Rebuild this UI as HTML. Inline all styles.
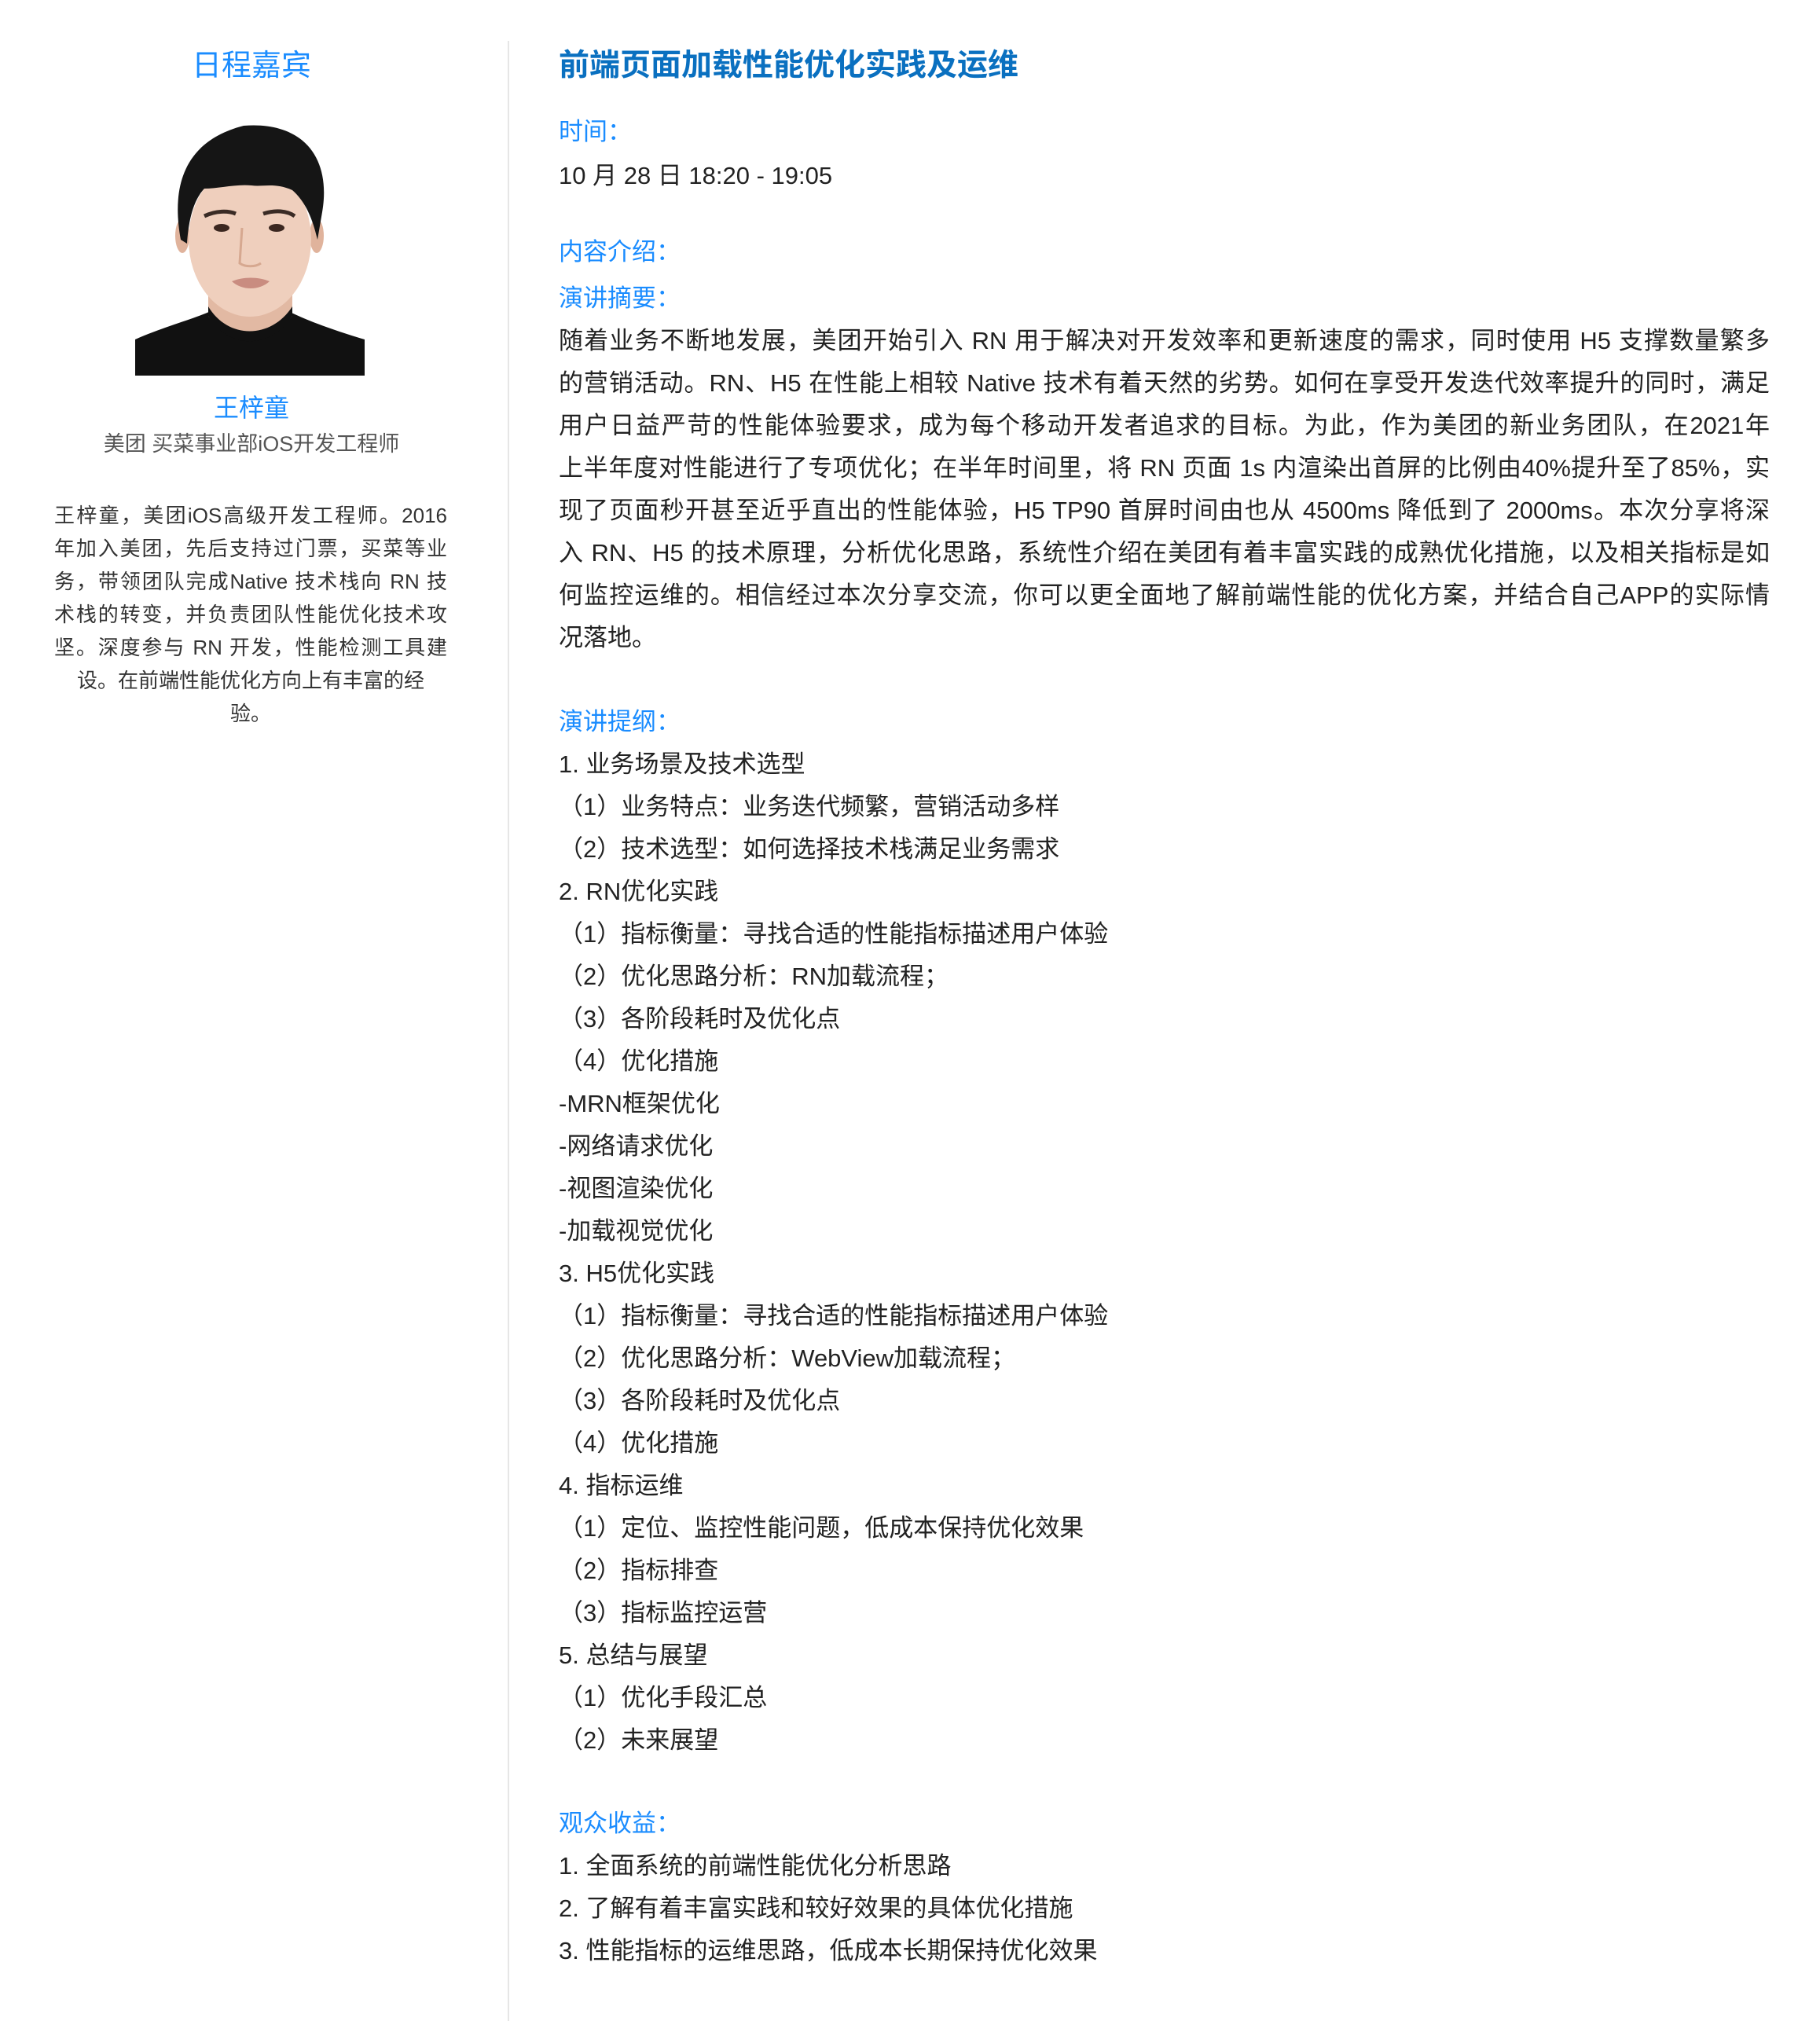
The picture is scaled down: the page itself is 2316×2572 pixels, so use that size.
<!DOCTYPE html>
<html><head><meta charset="utf-8">
<style>
html,body{margin:0;padding:0;background:#fff;}
body{width:2316px;height:2572px;position:relative;overflow:hidden;font-family:"Liberation Sans","Noto Sans CJK SC",sans-serif;color:#222;}
.a{position:absolute;white-space:nowrap;}
.lbl{color:#1a8cff;font-size:31px;line-height:54px;}
.txt{font-size:31px;line-height:54px;}
.pl{display:block;text-align:justify;text-align-last:justify;width:1541px;font-size:31px;line-height:54px;white-space:nowrap;}
.pl.last{text-align-last:left;}
.bio div{text-align:justify;text-align-last:justify;}
</style></head><body>
<div class="a" style="left:646px;top:52px;width:2px;height:2520px;background:#e6e6e6"></div>

<div class="a" style="left:0;width:640px;top:58px;text-align:center;font-size:38px;line-height:52px;color:#1a8cff">日程嘉宾</div>
<svg class="a" style="left:160px;top:140px" width="320" height="350" viewBox="0 0 320 350">
<rect x="12" y="18" width="292" height="320" fill="#fff"/>
<path d="M12 292 C50 275 90 265 110 255 L205 255 C230 268 270 282 304 292 L304 338 L12 338Z" fill="#111"/>
<path d="M105 210 L105 262 C130 300 185 300 212 262 L212 210Z" fill="#e2b9a3"/>
<path d="M105 250 C130 292 185 292 212 250 L212 262 C185 305 130 305 105 262Z" fill="#111"/>
<ellipse cx="72" cy="160" rx="9" ry="22" fill="#e0b39c"/>
<ellipse cx="243" cy="160" rx="9" ry="22" fill="#e0b39c"/>
<ellipse cx="158" cy="165" rx="78" ry="98" fill="#efcfbd"/>
<path d="M70 165 C58 100 72 40 150 20 C225 14 262 60 250 130 L244 165 C238 140 230 118 212 102 C190 92 175 98 160 96 C140 94 118 100 100 100 C86 115 80 140 78 170Z" fill="#151515"/>
<path d="M100 135 C115 128 130 128 140 132" stroke="#3a2b25" stroke-width="5" fill="none"/>
<path d="M175 132 C190 127 205 128 215 135" stroke="#3a2b25" stroke-width="5" fill="none"/>
<ellipse cx="122" cy="150" rx="10" ry="5" fill="#3b2720"/>
<ellipse cx="192" cy="150" rx="10" ry="5" fill="#3b2720"/>
<path d="M148 150 L145 195 C152 200 165 200 172 195" stroke="#d6a890" stroke-width="3" fill="none"/>
<path d="M135 218 C150 212 168 212 183 218 C170 230 148 230 135 218Z" fill="#c98c80"/>
</svg>
<div class="a" style="left:0;width:640px;top:497px;text-align:center;font-size:32px;line-height:44px;color:#1a8cff">王梓童</div>
<div class="a" style="left:0;width:640px;top:546px;text-align:center;font-size:27px;line-height:38px;color:#555">美团 买菜事业部iOS开发工程师</div>
<div class="a bio" style="left:69px;width:500px;top:635px;font-size:26px;line-height:42px;color:#333;white-space:normal">
<div>王梓童，美团iOS高级开发工程师。2016</div>
<div>年加入美团，先后支持过门票，买菜等业</div>
<div>务，带领团队完成Native 技术栈向 RN 技</div>
<div>术栈的转变，并负责团队性能优化技术攻</div>
<div>坚。深度参与 RN 开发，性能检测工具建</div>
<div style="text-align:center;text-align-last:center">设。在前端性能优化方向上有丰富的经</div>
<div style="text-align:center;text-align-last:center">验。</div>
</div>

<div class="a" style="left:711px;top:58px;font-size:39px;line-height:52px;font-weight:bold;color:#0a70c0">前端页面加载性能优化实践及运维</div>
<div class="a lbl" style="left:711px;top:141px">时间：</div>
<div class="a txt" style="left:711px;top:197px">10 月 28 日 18:20 - 19:05</div>
<div class="a lbl" style="left:711px;top:294px">内容介绍：</div>
<div class="a lbl" style="left:711px;top:353px">演讲摘要：</div>
<div class="a" style="left:711px;top:407px">
<span class="pl">随着业务不断地发展，美团开始引入 RN 用于解决对开发效率和更新速度的需求，同时使用 H5 支撑数量繁多</span>
<span class="pl">的营销活动。RN、H5 在性能上相较 Native 技术有着天然的劣势。如何在享受开发迭代效率提升的同时，满足</span>
<span class="pl">用户日益严苛的性能体验要求，成为每个移动开发者追求的目标。为此，作为美团的新业务团队，在2021年</span>
<span class="pl">上半年度对性能进行了专项优化；在半年时间里，将 RN 页面 1s 内渲染出首屏的比例由40%提升至了85%，实</span>
<span class="pl">现了页面秒开甚至近乎直出的性能体验，H5 TP90 首屏时间由也从 4500ms 降低到了 2000ms。本次分享将深</span>
<span class="pl">入 RN、H5 的技术原理，分析优化思路，系统性介绍在美团有着丰富实践的成熟优化措施，以及相关指标是如</span>
<span class="pl">何监控运维的。相信经过本次分享交流，你可以更全面地了解前端性能的优化方案，并结合自己APP的实际情</span>
<span class="pl last">况落地。</span>
</div>
<div class="a lbl" style="left:711px;top:892px">演讲提纲：</div>
<div class="a txt" style="left:711px;top:946px">
1. 业务场景及技术选型<br>
（1）业务特点：业务迭代频繁，营销活动多样<br>
（2）技术选型：如何选择技术栈满足业务需求<br>
2. RN优化实践<br>
（1）指标衡量：寻找合适的性能指标描述用户体验<br>
（2）优化思路分析：RN加载流程；<br>
（3）各阶段耗时及优化点<br>
（4）优化措施<br>
-MRN框架优化<br>
-网络请求优化<br>
-视图渲染优化<br>
-加载视觉优化<br>
3. H5优化实践<br>
（1）指标衡量：寻找合适的性能指标描述用户体验<br>
（2）优化思路分析：WebView加载流程；<br>
（3）各阶段耗时及优化点<br>
（4）优化措施<br>
4. 指标运维<br>
（1）定位、监控性能问题，低成本保持优化效果<br>
（2）指标排查<br>
（3）指标监控运营<br>
5. 总结与展望<br>
（1）优化手段汇总<br>
（2）未来展望
</div>
<div class="a lbl" style="left:711px;top:2294px">观众收益：</div>
<div class="a txt" style="left:711px;top:2348px">
1. 全面系统的前端性能优化分析思路<br>
2. 了解有着丰富实践和较好效果的具体优化措施<br>
3. 性能指标的运维思路，低成本长期保持优化效果
</div>
</body></html>
